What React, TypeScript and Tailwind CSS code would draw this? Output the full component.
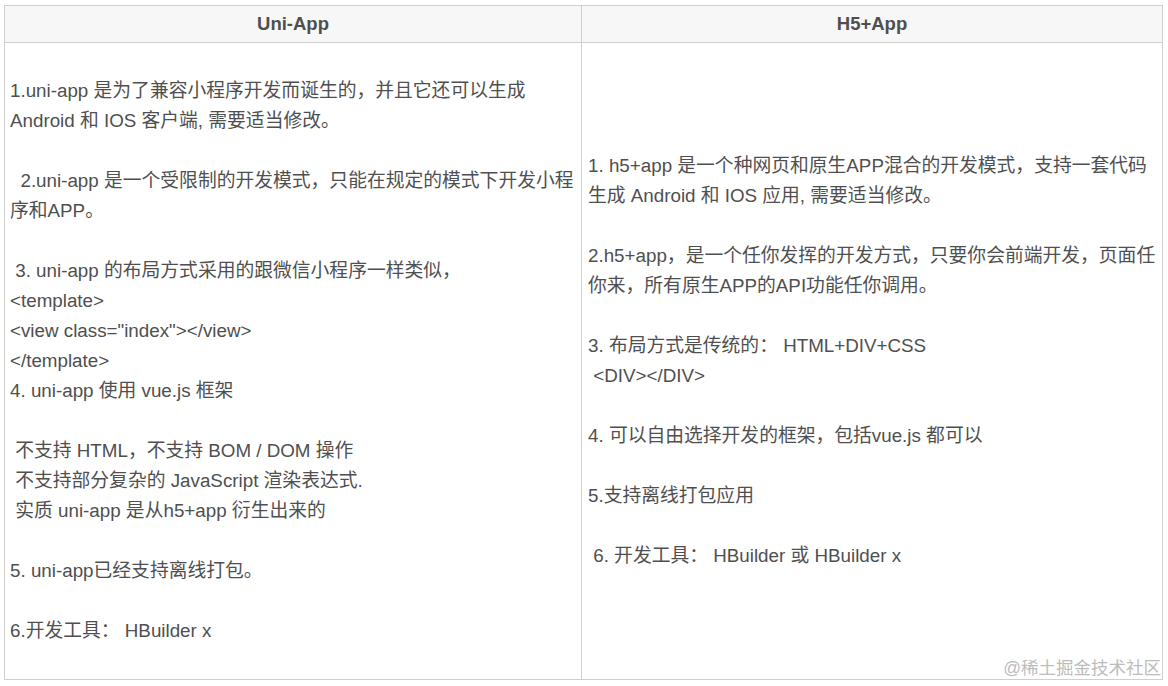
const left = [
  "1.uni-app 是为了兼容小程序开发而诞生的，并且它还可以生成",
  "Android 和 IOS 客户端, 需要适当修改。",
  "",
  "  2.uni-app 是一个受限制的开发模式，只能在规定的模式下开发小程",
  "序和APP。",
  "",
  " 3. uni-app 的布局方式采用的跟微信小程序一样类似，",
  "<template>",
  '<view class="index"></view>',
  "</template>",
  "4. uni-app 使用 vue.js 框架",
  "",
  " 不支持 HTML，不支持 BOM / DOM 操作",
  " 不支持部分复杂的 JavaScript 渲染表达式.",
  " 实质 uni-app 是从h5+app 衍生出来的",
  "",
  "5. uni-app已经支持离线打包。",
  "",
  "6.开发工具： HBuilder x",
];

const right = [
  "1. h5+app 是一个种网页和原生APP混合的开发模式，支持一套代码",
  "生成 Android 和 IOS 应用, 需要适当修改。",
  "",
  "2.h5+app，是一个任你发挥的开发方式，只要你会前端开发，页面任",
  "你来，所有原生APP的API功能任你调用。",
  "",
  "3. 布局方式是传统的： HTML+DIV+CSS",
  " <DIV></DIV>",
  "",
  "4. 可以自由选择开发的框架，包括vue.js 都可以",
  "",
  "5.支持离线打包应用",
  "",
  " 6. 开发工具： HBuilder 或 HBuilder x",
];

function Cell({ lines, pad }: { lines: string[]; pad: string }) {
  return (
    <div className={"flex items-center h-[636px] " + pad}>
      <div className="w-full">
        {lines.map((l, i) => (
          <div key={i} className="h-[30px] leading-[30px] whitespace-pre">
            {l}
          </div>
        ))}
      </div>
    </div>
  );
}

export default function App() {
  return (
    <div
      className="relative w-[1168px] h-[686px] bg-white text-[#4f4f4f] text-[18.8px]"
      style={{ fontFamily: '"Liberation Sans", Arial, "Noto Sans CJK SC", sans-serif' }}
    >
      <div className="pt-[5px] pl-[4px]">
        <div className="w-[1159px] border border-[#cfcfcf] grid grid-cols-[577px_1fr]">
          <div className="h-[37px] bg-[#f7f7f7] border-r border-b border-[#cfcfcf] flex items-center justify-center font-bold text-[18.5px]">
            Uni-App
          </div>
          <div className="h-[37px] bg-[#f7f7f7] border-b border-[#cfcfcf] flex items-center justify-center font-bold text-[18.5px]">
            H5+App
          </div>
          <div className="border-r border-[#cfcfcf]">
            <Cell lines={left} pad="pl-[5px]" />
          </div>
          <Cell lines={right} pad="pl-[6px]" />
        </div>
      </div>
      <div className="absolute right-[7px] top-[656px] text-[17.5px] text-[#bdbdbd] leading-[24px]">
        @稀土掘金技术社区
      </div>
    </div>
  );
}
